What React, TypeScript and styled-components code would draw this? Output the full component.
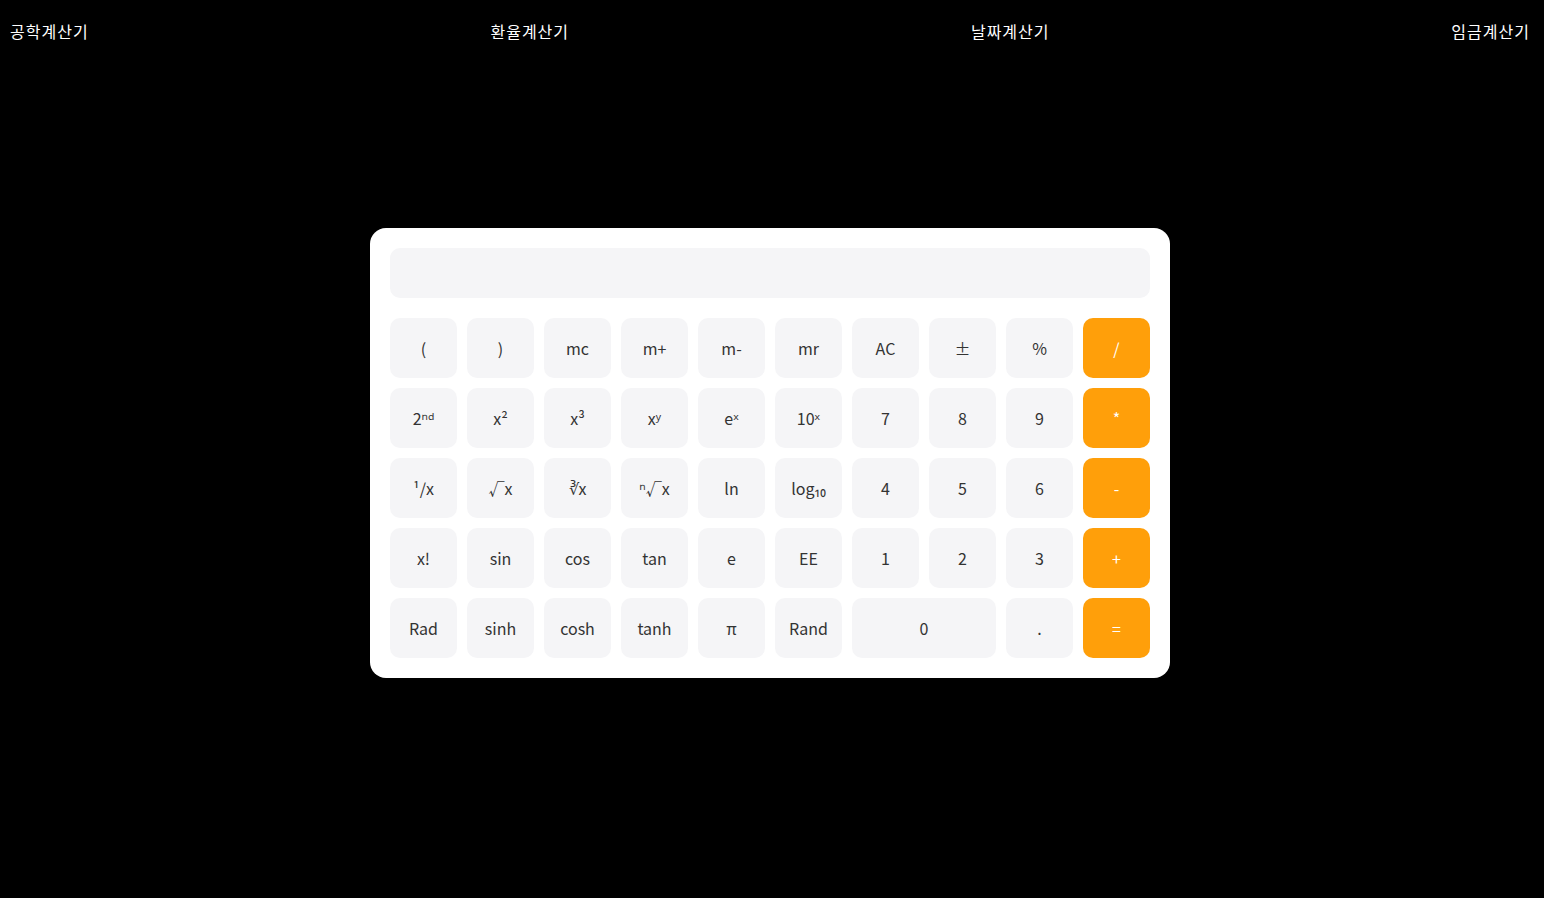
import styled, { createGlobalStyle } from "styled-components";

const GlobalStyle = createGlobalStyle`
  body {
    margin: 0;
    background-color: #000;
    font-family: "Noto Sans CJK KR", "Noto Sans", sans-serif;
  }
`;

const Page = styled.div`
  min-height: 100vh;
  display: flex;
  flex-direction: column;
  position: relative;
`;

const Nav = styled.nav`
  position: absolute;
  top: 0;
  left: 0;
  right: 0;
  display: flex;
  justify-content: space-between;
  padding: 19px 14px 19px 10px;
`;

const NavLink = styled.a`
  color: #fff;
  font-size: 16px;
  line-height: 24px;
  letter-spacing: 1px;
  text-decoration: none;
  cursor: pointer;
`;

const Main = styled.main`
  flex: 1;
  min-height: 100vh;
  display: flex;
  align-items: center;
  justify-content: center;
  padding: 8px 4px 0 0;
  box-sizing: border-box;
`;

const Calculator = styled.div`
  width: 800px;
  box-sizing: border-box;
  background-color: #fff;
  border-radius: 16px;
  padding: 20px;
  display: flex;
  flex-direction: column;
  gap: 20px;
`;

const Display = styled.div`
  height: 50px;
  background-color: #f5f5f7;
  border-radius: 10px;
`;

const Grid = styled.div`
  display: grid;
  grid-template-columns: repeat(10, 67px);
  grid-auto-rows: 60px;
  gap: 10px;
`;

const Key = styled.button<{ $op?: boolean; $wide?: boolean }>`
  border: none;
  border-radius: 10px;
  background-color: ${({ $op }) => ($op ? "#ff9f0a" : "#f5f5f7")};
  color: ${({ $op }) => ($op ? "#fff" : "#333")};
  font-family: inherit;
  font-size: 16px;
  line-height: 1;
  grid-column: ${({ $wide }) => ($wide ? "span 2" : "auto")};
  cursor: pointer;
  padding: 0;
`;

const links = ["공학계산기", "환율계산기", "날짜계산기", "임금계산기"];

const keys: { label: string; op?: boolean; wide?: boolean }[] = [
  { label: "(" },
  { label: ")" },
  { label: "mc" },
  { label: "m+" },
  { label: "m-" },
  { label: "mr" },
  { label: "AC" },
  { label: "±" },
  { label: "%" },
  { label: "/", op: true },
  { label: "2ⁿᵈ" },
  { label: "x²" },
  { label: "x³" },
  { label: "xʸ" },
  { label: "eˣ" },
  { label: "10ˣ" },
  { label: "7" },
  { label: "8" },
  { label: "9" },
  { label: "*", op: true },
  { label: "¹/x" },
  { label: "√x" },
  { label: "∛x" },
  { label: "ⁿ√x" },
  { label: "ln" },
  { label: "log₁₀" },
  { label: "4" },
  { label: "5" },
  { label: "6" },
  { label: "-", op: true },
  { label: "x!" },
  { label: "sin" },
  { label: "cos" },
  { label: "tan" },
  { label: "e" },
  { label: "EE" },
  { label: "1" },
  { label: "2" },
  { label: "3" },
  { label: "+", op: true },
  { label: "Rad" },
  { label: "sinh" },
  { label: "cosh" },
  { label: "tanh" },
  { label: "π" },
  { label: "Rand" },
  { label: "0", wide: true },
  { label: "." },
  { label: "=", op: true },
];

export default function App() {
  return (
    <Page>
      <GlobalStyle />
      <Nav>
        {links.map((link) => (
          <NavLink key={link}>{link}</NavLink>
        ))}
      </Nav>
      <Main>
        <Calculator>
          <Display />
          <Grid>
            {keys.map(({ label, op, wide }) => (
              <Key key={label} $op={op} $wide={wide}>
                {label}
              </Key>
            ))}
          </Grid>
        </Calculator>
      </Main>
    </Page>
  );
}
